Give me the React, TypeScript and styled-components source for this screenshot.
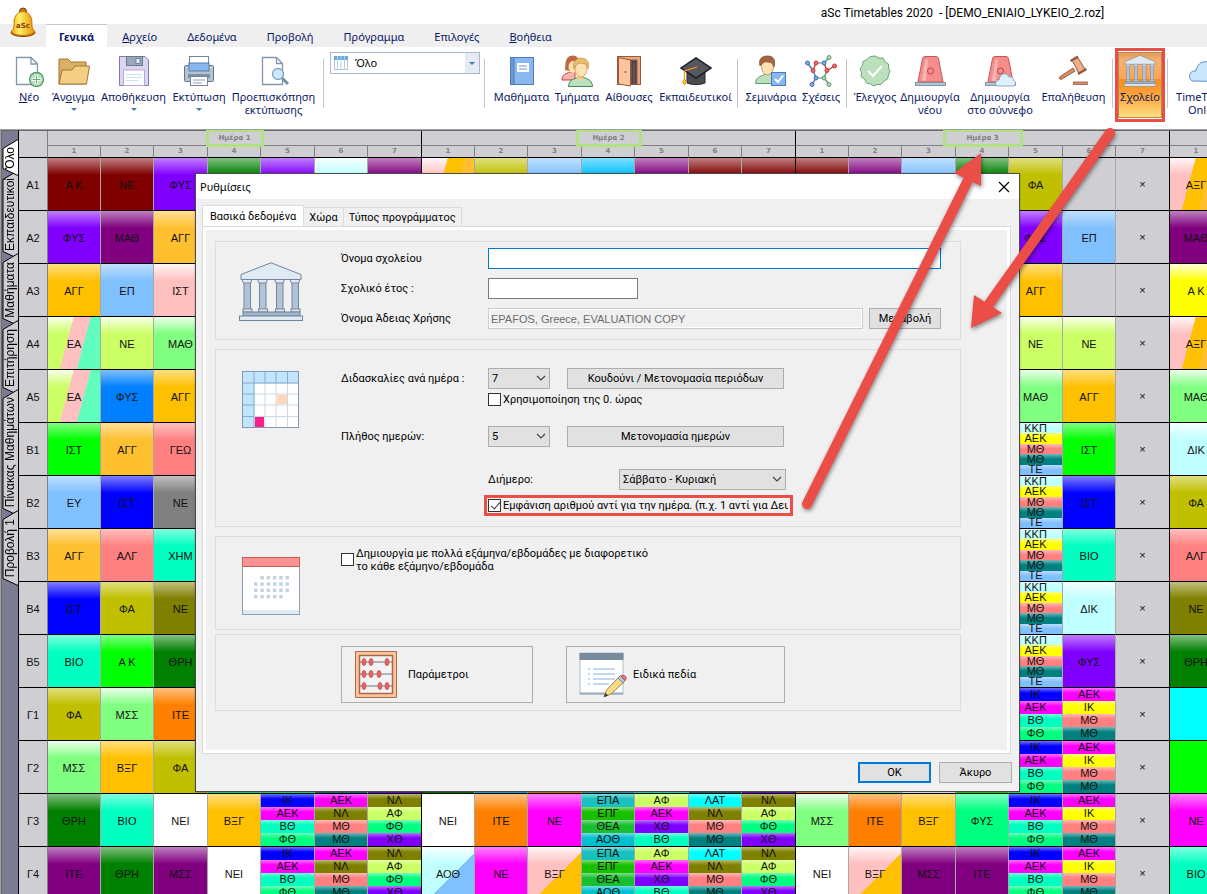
import React from 'react';
import styled, { createGlobalStyle, css } from 'styled-components';

const Global = createGlobalStyle`
  * { box-sizing: border-box; }
  body { margin: 0; background: #fff; font-family: "Liberation Sans", Arial, sans-serif; }
  button, input, select { font: inherit; color: inherit; margin: 0; }
`;

const ui = '"Noto Sans", "Open Sans", sans-serif';
const red = '#eb4d47';
const navy = '#0b1766';

/* ---------- window header ---------- */

const Page = styled.div`
  height: 100vh;
  display: flex;
  flex-direction: column;
  position: relative;
  overflow: hidden;
`;

const TitleBar = styled.header`
  height: 24px;
  flex: none;
  padding: 5px 0 0 68%;
  font: 12px/17px Roboto, sans-serif;
  color: #000;
  white-space: pre;
`;

const Bell = styled.svg`
  position: absolute;
  left: 10px;
  top: 7px;
  width: 26px;
  height: 31px;
`;

const Menu = styled.nav`
  height: 23px;
  flex: none;
  display: flex;
  background: #efefef;
  padding-left: 46px;
`;

const MenuItem = styled.button<{ $active?: boolean }>`
  border: 0;
  border-top: 1px solid ${p => (p.$active ? '#c4c4c4' : 'transparent')};
  background: ${p => (p.$active ? '#fff' : 'transparent')};
  font: ${p => (p.$active ? 'bold' : 'normal')} 11px/16px ${ui};
  color: ${navy};
  padding: 4px ${p => (p.$active ? 13 : 15)}px 2px;
`;

/* ---------- ribbon ---------- */

const Ribbon = styled.div`
  height: 82px;
  flex: none;
  display: flex;
  align-items: flex-start;
  padding-left: 8px;
  overflow: hidden;
`;

const Tool = styled.button<{ $w: number; $on?: boolean }>`
  width: ${p => p.$w}px;
  height: 75px;
  flex: none;
  display: flex;
  flex-direction: column;
  align-items: center;
  border: 0;
  padding: 8px 0 0;
  background: transparent;
  color: ${navy};
  font: 11px/13px ${ui};
  white-space: nowrap;
  position: relative;
  svg.icon { width: 32px; height: 32px; flex: none; margin-bottom: 3px; }
  ${p => p.$on && css`
    z-index: 1;
    height: 70px;
    margin-top: 3px;
    padding-top: 5px;
    background: #fff;
    outline: 3px solid ${red};
    outline-offset: -1px;
    &::before {
      content: '';
      position: absolute;
      inset: 2px 1px 2px 1px;
      border: 1px solid #b98a4a;
      background: linear-gradient(#e39a5c 0, #f8b273 12%, #f9a552 40%, #f98b1c 41%, #fca93e 70%, #fede84 100%);
    }
    > * { position: relative; }
  `}
`;

const ToolLabel = styled.span`
  display: flex;
  flex-direction: column;
  align-items: center;
`;

const Drop = styled.span`
  border: 3px solid transparent;
  border-top-color: #4a78b0;
  border-bottom: 0;
  margin-top: 5px;
`;

const Sep = styled.div`
  width: 1px;
  height: 49px;
  flex: none;
  margin: 12px 4px 0;
  background: #c6c6c6;
`;

const ViewCombo = styled.div`
  width: 150px;
  height: 22px;
  flex: none;
  margin: 5px 0 0 2px;
  border: 1px solid #abb9d0;
  display: flex;
  align-items: center;
  position: relative;
  background: linear-gradient(90deg, #fff 134px, #e6eaf3 134px);
  > svg { position: absolute; left: 3px; top: 3px; pointer-events: none; }
  > span { position: absolute; right: 4px; margin: 0; pointer-events: none; }
`;

const ViewSelect = styled.select`
  appearance: none;
  width: 100%;
  height: 100%;
  border: 0;
  padding: 0 16px 0 24px;
  background: transparent;
  font: 11px/16px ${ui};
  color: #000;
`;

/* ---------- timetable ---------- */

const Board = styled.main`
  flex: 1;
  min-height: 0;
  display: flex;
  align-items: stretch;
  border-top: 1px solid #a0a0a0;
  border-left: 1px solid #a0a0a0;
  overflow: hidden;
  background: #cfced3;
`;

const Side = styled.aside`
  width: 18px;
  flex: none;
  border-left: 1px solid #696969;
  border-top: 1px solid #696969;
  border-right: 1px solid #000;
  background: #7b7b94;
  padding-top: 8px;
  display: flex;
  flex-direction: column;
`;

const SideTab = styled.button<{ $h: number; $on?: boolean }>`
  width: 16px;
  height: ${p => p.$h}px;
  flex: none;
  border: 0;
  padding: 0;
  margin-bottom: -6px;
  background: transparent;
  position: relative;
  z-index: ${p => (p.$on ? 1 : 0)};
  display: flex;
  align-items: center;
  justify-content: center;
  color: #000;
  font: 12px/14px "Liberation Sans", Arial, sans-serif;
  svg { position: absolute; left: 0; top: 0; }
  span { position: relative; writing-mode: vertical-rl; transform: rotate(180deg); white-space: nowrap; }
`;

const Table = styled.table`
  table-layout: fixed;
  width: 1524px;
  flex: none;
  border-collapse: separate;
  border-spacing: 0;
  border-top: 1px solid #696969;
  align-self: flex-start;
  font: 11px/13px "Liberation Sans", Arial, sans-serif;
  color: #111;
  th, td { padding: 0; font-weight: normal; text-align: center; }
`;

const DayHead = styled.th<{ $first: boolean }>`
  height: 14px;
  border-left: 1px solid ${p => (p.$first ? '#808080' : '#000')};
  && { font: bold 7px/14px "DejaVu Sans", sans-serif; }
  color: #808080;
  position: relative;
`;

const Mark = styled.span<{ $w: number }>`
  position: absolute;
  left: 50%;
  top: -2px;
  width: ${p => p.$w}px;
  height: 18px;
  transform: translateX(-50%);
  border: 3px solid #b0e284;
  pointer-events: none;
`;

const HourHead = styled.th<{ $line: string }>`
  height: 12px;
  border-top: 1px solid #808080;
  border-left: 1px solid ${p => p.$line};
  && { font: bold 7px/11px "DejaVu Sans", sans-serif; }
  color: #808080;
`;

const RowHead = styled.th`
  height: 53px;
  border-top: 1px solid #000;
  && { padding-top: 2px; }
`;

const Slot = styled.td<{ $line: string; $bg?: string }>`
  height: 53px;
  border-top: 1px solid #000;
  border-left: 1px solid ${p => p.$line};
  background: ${p => p.$bg || 'transparent'};
  background-clip: padding-box;
  overflow: hidden;
  white-space: nowrap;
  && { padding-top: ${p => (p.$bg ? 2 : 0)}px; }
`;

const Stack = styled.div`
  height: 52px;
  display: flex;
  flex-direction: column;
`;

const Layer = styled.div<{ $bg: string }>`
  flex: 1 1 0;
  min-height: 0;
  display: flex;
  align-items: center;
  justify-content: center;
  background: linear-gradient(rgba(255, 255, 255, 0.45), rgba(255, 255, 255, 0) 5px), ${p => p.$bg};
`;

/* ---------- dialog ---------- */

const Dialog = styled.section`
  position: absolute;
  left: 195px;
  top: 173px;
  width: 825px;
  border: 1px solid #4a4a4a;
  background: #f0f0f0;
  color: #000;
  font: 11px/13px Roboto, "Liberation Sans", sans-serif;
  box-shadow: 0 1px 2px rgba(0, 0, 0, 0.25);
`;

const DialogTitle = styled.div`
  height: 25px;
  display: flex;
  align-items: center;
  justify-content: space-between;
  padding: 0 9px 0 4px;
  background: #fff;
  font: 11px/16px ${ui};
`;

const Close = styled.button`
  border: 0;
  padding: 0;
  background: transparent;
  display: flex;
`;

const Tabs = styled.div`
  display: flex;
  align-items: flex-end;
  height: 27px;
  padding-left: 6px;
`;

const Tab = styled.button<{ $active?: boolean }>`
  height: ${p => (p.$active ? 21 : 19)}px;
  border: 1px solid #dcdcdc;
  border-bottom: 0;
  border-left-width: ${p => (p.$active ? 1 : 0)}px;
  padding: 0 ${p => (p.$active ? 7 : 5)}px;
  background: ${p => (p.$active ? '#fff' : '#f0f0f0')};
`;

const Panel = styled.div`
  margin: 0 8px 0 6px;
  border: 1px solid #dcdcdc;
  box-shadow: inset 0 0 0 3px #fff;
  padding: 14px 49px 42px 12px;
  display: flex;
  flex-direction: column;
  gap: 9px;
`;

const Group = styled.fieldset<{ $h: number; $top: number; $pull?: boolean }>`
  margin: ${p => (p.$pull ? '-5px 0 0' : '0')};
  border: 1px solid #dcdcdc;
  padding: 0 19px 0 0;
  min-width: 0;
  min-height: ${p => p.$h}px;
  display: grid;
  grid-template-columns: 125px 1fr;
  > div { padding-top: ${p => p.$top}px; }
`;

const Art = styled.svg`
  display: block;
  margin: 20px 0 0 23px;
  width: 64px;
  height: 60px;
`;

const Lines = styled.div<{ $gap: number }>`
  display: flex;
  flex-direction: column;
  gap: ${p => p.$gap}px;
`;

const Line = styled.div<{ $indent?: boolean; $after?: number }>`
  display: flex;
  align-items: center;
  height: 21px;
  padding-left: ${p => (p.$indent ? 147 : 0)}px;
  margin-bottom: ${p => p.$after || 0}px;
`;

const Label = styled.label<{ $w?: number }>`
  width: ${p => p.$w || 147}px;
  flex: none;
`;

const Field = styled.input<{ $w?: number; $focus?: boolean }>`
  height: 21px;
  border: 1px solid ${p => (p.$focus ? '#0078d7' : p.disabled ? '#cccccc' : '#7a7a7a')};
  background: ${p => (p.disabled ? '#f0f0f0' : '#fff')};
  box-shadow: ${p => (p.disabled ? 'inset 0 0 0 1px #fff' : 'none')};
  color: ${p => (p.disabled ? '#6d6d6d' : '#000')};
  padding: 0 2px;
  min-width: 0;
  outline: 0;
  font-family: "Liberation Sans", Arial, sans-serif;
  ${p => (p.$w ? `width: ${p.$w}px;` : 'flex: 1;')}
`;

const Push = styled.button<{ $w: number; $primary?: boolean }>`
  width: ${p => p.$w}px;
  height: 21px;
  flex: none;
  padding: 0;
  background: #e1e1e1;
  border: ${p => (p.$primary ? '2px solid #0078d7' : '1px solid #adadad')};
  ${Field} + & { margin-left: 6px; }
`;

const Picker = styled.span<{ $w: number; $gap: number }>`
  position: relative;
  width: ${p => p.$w}px;
  height: 21px;
  margin-right: ${p => p.$gap}px;
  svg { position: absolute; right: 4px; top: 7px; pointer-events: none; }
`;

const Select = styled.select`
  appearance: none;
  width: 100%;
  height: 100%;
  border: 1px solid #adadad;
  background: #e1e1e1;
  padding: 0 16px 0 3px;
`;

const Check = styled.label<{ $wrap?: boolean }>`
  display: flex;
  align-items: ${p => (p.$wrap ? 'flex-start' : 'center')};
  gap: 2px;
  white-space: nowrap;
  input {
    appearance: none;
    width: 13px;
    height: 13px;
    flex: none;
    border: 1px solid #333;
    background: #fff;
    margin-top: ${p => (p.$wrap ? 6 : 0)}px;
    position: relative;
  }
  input:checked::after {
    content: '';
    position: absolute;
    left: 4px;
    top: 0;
    width: 4px;
    height: 8px;
    border: solid #333;
    border-width: 0 1px 1px 0;
    transform: rotate(40deg);
  }
`;

const Highlight = styled.div`
  width: 309px;
  height: 21px;
  margin-left: -4px;
  border: 3px solid ${red};
  padding: 0 2px 0 1px;
  display: flex;
  align-items: center;
  overflow: hidden;
  label { overflow: hidden; }
`;

const BigButtons = styled.div`
  display: flex;
  gap: 33px;
`;

const BigButton = styled.button<{ $w: number }>`
  width: ${p => p.$w}px;
  height: 57px;
  border: 1px solid #adadad;
  background: #f0f0f0;
  padding: 0 12px;
  display: flex;
  align-items: center;
  gap: 6px;
  svg { width: 48px; height: 50px; flex: none; }
`;

const Footer = styled.div`
  display: flex;
  justify-content: flex-end;
  gap: 8px;
  padding: 8px 7px 8px;
`;

const Arrows = styled.svg`
  position: absolute;
  left: 790px;
  top: 120px;
  width: 340px;
  height: 400px;
  pointer-events: none;
  filter: drop-shadow(1px 2px 2px rgba(0, 0, 0, 0.45));
`;

/* ---------- icons ---------- */

const Icon = ({ children }: { children: React.ReactNode }) => (
  <svg className="icon" viewBox="0 0 32 32" fill="none" aria-hidden="true">{children}</svg>
);

const NewIcon = () => (
  <Icon>
    <path d="M3.500 2.500H18L24.500 9V29.500H3.500Z M18 2.500V9H24.500" fill="#fff" stroke="#8496a9" strokeWidth="1.300" />
    <circle cx="23.500" cy="24.500" r="7" fill="#bce0bd" stroke="#4f9b6a" strokeWidth="1.300" />
    <path d="M23.500 20V29M19 24.500H28" stroke="#fff" strokeWidth="2.600" />
    <path d="M23.500 20.500V28.500M19.500 24.500H27.500" stroke="#5fae7a" strokeWidth="1" />
  </Icon>
);

const OpenIcon = () => (
  <Icon>
    <path d="M1 29V4H10L13 7H28V29Z" fill="#dbb065" stroke="#9c7636" />
    <path d="M1 29L4 15H14L17 11H31.500L28.500 29Z" fill="#f5ce85" stroke="#9c7636" />
  </Icon>
);

const SaveIcon = () => (
  <Icon>
    <path d="M1.500 1.500H27L30.500 5V30.500H1.500Z" fill="#dcd5f2" stroke="#8b75a1" />
    <rect x="8.500" y="1.500" width="16" height="9" fill="#9ba6b7" stroke="#66788f" />
    <rect x="18" y="3.500" width="4" height="5" fill="#e4e9f0" stroke="#66788f" strokeWidth=".8" />
    <rect x="5.500" y="15" width="21" height="15.500" fill="#fff" stroke="#b9a6dd" />
    <path d="M8 19.500H24M8 22.500H24M8 25.500H20" stroke="#c7e4f8" />
  </Icon>
);

const PrintIcon = () => (
  <Icon>
    <rect x="6.500" y="1.500" width="19" height="12" fill="#fff" stroke="#73869a" />
    <rect x="1.500" y="10.500" width="29" height="16" rx="1" fill="#b6c4d2" stroke="#62758a" />
    <rect x="6" y="8" width="20" height="8" fill="#8bb7f0" stroke="#4e7ab5" />
    <rect x="5" y="19" width="22" height="4" fill="#7d90a6" />
    <rect x="7.500" y="21.500" width="17" height="9" fill="#fff" stroke="#73869a" />
    <path d="M10 25H22M10 28H19" stroke="#8fa1b3" />
    <circle cx="28" cy="13" r="1" fill="#f4dd7a" />
  </Icon>
);

const PreviewIcon = () => (
  <Icon>
    <path d="M4.500 2.500H18.500L24.500 8.500V29.500H4.500Z M18.500 2.500V8.500H24.500" fill="#fff" stroke="#8496a9" strokeWidth="1.300" />
    <path d="M24 23L30 29" stroke="#7b8fa8" strokeWidth="3" />
    <circle cx="20" cy="19" r="5.500" fill="#d0e8fb" stroke="#7aa0ca" strokeWidth="1.300" />
  </Icon>
);

const BookIcon = () => (
  <Icon>
    <rect x="4.500" y="2.500" width="23" height="27" fill="#8bb7f0" stroke="#4e7ab5" />
    <rect x="4.500" y="2.500" width="3.500" height="27" fill="#6b9ade" stroke="#4e7ab5" />
    <rect x="11" y="8" width="12" height="9" fill="#fff" />
    <path d="M13 11H21M13 14H21" stroke="#6c93cb" />
  </Icon>
);

const ClassIcon = () => (
  <Icon>
    <path d="M4 15C5 10 3 1 12 .5C19 1 19 8 18 15L12 17Z" fill="#c1663f" />
    <path d="M1 25C1 19 5 19 9 17H14V25Z" fill="#f5b3b2" stroke="#c74343" />
    <ellipse cx="12" cy="12" rx="4.500" ry="6" fill="#fbdfae" />
    <path d="M7.500 31.500C8 24 13 24.500 17 22H22C26 24.500 31 24 31.500 31.500Z" fill="#bce0bd" stroke="#3f8a58" />
    <path d="M16 19H22V24L19 26L16 24Z" fill="#f5ce85" />
    <ellipse cx="20" cy="14" rx="6" ry="8" fill="#ffe0b2" stroke="#c69a48" strokeWidth=".7" />
    <path d="M13 14C11 6 16 3 20 3C26 3 29 7 27 14L25 9C20 8 17 8 15 10Z" fill="#e6be6c" stroke="#b98c3c" strokeWidth=".6" />
  </Icon>
);

const RoomIcon = () => (
  <Icon>
    <rect x="4.500" y="1.500" width="23" height="28" fill="#e9a783" stroke="#955b3d" />
    <rect x="8" y="5" width="16" height="24.500" fill="#54424a" stroke="#955b3d" />
    <path d="M21 8V29M18 6V29" stroke="#76616a" />
    <path d="M5.500 2.500L17.500 5V31L5.500 29Z" fill="#ffc49c" stroke="#955b3d" />
    <circle cx="12.500" cy="17" r="1" fill="#955b3d" />
  </Icon>
);

const TeacherIcon = () => (
  <Icon>
    <path d="M7 15H25V28C20 30 12 30 7 28Z" fill="#4a4a4d" stroke="#2b2b2f" />
    <path d="M1 13L16 3L31 13L16 23Z" fill="#58585c" stroke="#141b2b" strokeWidth="1.500" />
    <path d="M17 12L4.500 16V25" stroke="#f09a1c" strokeWidth="1.300" />
    <path d="M4.500 24L2.500 27L4.500 30L6.500 27Z" fill="#f7c23e" stroke="#f09a1c" />
  </Icon>
);

const SeminarIcon = () => (
  <Icon>
    <path d="M.5 28.500C1 20 8 22 11 18H16C18 22 24 21 25 28.500Z" fill="#bce0bd" stroke="#5d9b6f" />
    <ellipse cx="12.500" cy="11.500" rx="6" ry="8.500" fill="#ffe0b2" stroke="#a87d4c" strokeWidth=".7" />
    <path d="M5 11C3 3 8 1 12.500 1C18 1 21 4 19 12L17 8C13 7 10 6 8 8Z" fill="#a5663f" stroke="#7a4525" strokeWidth=".7" />
    <rect x="16.500" y="17.500" width="14" height="13" fill="#8bb7f0" stroke="#4e7ab5" />
    <path d="M20 24L23 27L28 20.500" stroke="#fff" strokeWidth="2" />
  </Icon>
);

const nodes: [number, number, 'r' | 'b' | 'g'][] = [
  [2.500, 8, 'b'], [11, 8, 'r'], [19, 8, 'b'], [24, 2.500, 'g'], [8, 15.500, 'r'], [22, 15.500, 'r'],
  [29.500, 11, 'r'], [11, 23, 'b'], [19, 23, 'g'], [7, 29.500, 'b'], [24, 29.500, 'g'],
];

const RelationIcon = () => (
  <Icon>
    <path d="M11 8L19 8M11 23L19 23" stroke="#6b7785" strokeWidth="1.200" />
    <path d="M2.500 8L8 15.500M11 23L7 29.500M8 15.500L11 23" stroke="#4573bb" strokeWidth="1.400" />
    <path d="M11 8L8 15.500M19 8L22 15.500L29.500 11" stroke="#c13a3a" strokeWidth="1.400" />
    <path d="M19 8L24 2.500M22 15.500L19 23L24 29.500" stroke="#5a9a6a" strokeWidth="1.400" />
    {nodes.map(([x, y, c], i) => (
      <circle key={i} cx={x} cy={y} r="2" fill={c === 'r' ? '#ef6b6b' : c === 'b' ? '#7fabea' : '#b2dcb6'} stroke={c === 'r' ? '#c13a3a' : c === 'b' ? '#3f6db3' : '#5a9a6a'} />
    ))}
  </Icon>
);

const CheckIcon = () => (
  <Icon>
    <path d="M16 1L20 3L24 3L26 7L29.500 9L29.500 13L31 16L29.500 20L28.500 24L25 26L22 29.500L18 29.500L15 31L11.500 29L7.500 28L5.500 24L2 21.500L2.500 17.500L1 14L3.500 10.500L4 6.500L8 4.500L11 1.500Z" fill="#bce0bd" stroke="#68a578" />
    <path d="M9 16L14 21L23 11" stroke="#fff" strokeWidth="2" />
  </Icon>
);

const Siren = () => (
  <>
    <path d="M4 27L8.500 3.500Q9 1.500 11 1.500H22Q24 1.500 24.500 3.500L29 27Z" fill="#f58d8d" stroke="#c95454" />
    <path d="M7.500 26L11.500 4.500H14L12 26Z" fill="#f9b3b3" />
    <circle cx="16.500" cy="16" r="3" fill="#f58d8d" stroke="#c23f3f" />
    <rect x="1.500" y="27.500" width="30" height="3" fill="#b6c4d2" stroke="#73869a" strokeWidth=".8" />
  </>
);

const GenIcon = () => <Icon><Siren /></Icon>;

const CloudGenIcon = () => (
  <Icon>
    <Siren />
    <path d="M13 31C10 29 12 24.500 15 25C16 17.500 23 17 25 22C28 21 30 24 29.500 25.500C32 26 32 30 30 31Z" fill="#dff0fe" stroke="#7496c4" strokeWidth=".8" />
  </Icon>
);

const GavelIcon = () => (
  <Icon>
    <path d="M1.500 22L15 13L17 16L3 24.500Q1 24 1.500 22Z" fill="#d98e6a" stroke="#955b3d" />
    <path d="M14 5L20 3L27 14L21 18.500Z" fill="#f0ae86" stroke="#955b3d" />
    <path d="M12.500 6L20 1.500M20 19L28.500 14" stroke="#955b3d" strokeWidth="2.400" />
    <rect x="15.500" y="27" width="14" height="2.500" fill="#d98e6a" stroke="#955b3d" strokeWidth=".8" />
  </Icon>
);

const Temple = () => (
  <g stroke="#71859c" strokeWidth="1">
    <path d="M2 12.500L32 .8L62 12.500V17.500H2Z" fill="#dfeaf2" />
    {[3, 18.500, 35.500, 51].map(x => (
      <g key={x}>
        <rect x={x + 2} y="20" width="6.500" height="28" fill="#b3c3d6" />
        <path d={`M${x} 17.500H${x + 10}L${x + 8.500} 21H${x + 1.500}Z`} fill="#dfeaf2" />
        <rect x={x + 1} y="47" width="9" height="3" fill="#dfeaf2" />
      </g>
    ))}
    <rect x="4" y="50" width="57" height="4" fill="#a3b5c9" />
    <rect x=".5" y="54" width="63" height="4.500" fill="#dfeaf2" />
  </g>
);

const SchoolIcon = () => (
  <svg className="icon" viewBox="0 0 64 60" fill="none" preserveAspectRatio="none" aria-hidden="true"><Temple /></svg>
);

const OnlineIcon = () => (
  <Icon>
    <path d="M3 26C-2 22 1 15 7 16C8 6 20 3 24 12C29 10 33 15 31 18C37 19 37 26 32 26.500Z" fill="#c9e6fd" stroke="#5b8fcf" />
  </Icon>
);

const TableIcon = () => (
  <svg width="14" height="14" viewBox="0 0 14 14" aria-hidden="true">
    <rect x=".5" y=".5" width="13" height="13" fill="#fff" stroke="#b4c4d3" />
    <rect x="0" y="0" width="14" height="4" fill="#6aa8e0" />
    <path d="M3.500 0V14M7 0V14M10.500 0V14" stroke="#b4cfe4" />
  </svg>
);

const WeekArt = () => (
  <Art viewBox="0 0 64 60" aria-hidden="true">
    <rect x="3.500" y="1.500" width="56" height="56" fill="#fff" />
    <path d="M3.500 1.500H59.500V13H15V57.500H3.500Z" fill="#c0e5fd" />
    <path d="M15 1.500V57.500M26 1.500V57.500M37 1.500V57.500M48.500 1.500V57.500M3.500 13H59.500M3.500 24H59.500M3.500 35H59.500M3.500 46.500H59.500" stroke="#ccd9e4" />
    <path d="M15 1.500V57.500M26 1.500V13M37 1.500V13M48.500 1.500V13M3.500 13H59.500M3.500 24H15M3.500 35H15M3.500 46.500H15" stroke="#86aed6" />
    <rect x="38" y="25" width="10" height="9" fill="#ffd7b8" />
    <rect x="16" y="47" width="9" height="10" fill="#ff1f88" />
    <rect x="3.500" y="1.500" width="56" height="56" fill="none" stroke="#8399b2" />
  </Art>
);

const MonthArt = () => (
  <Art viewBox="0 0 64 60" aria-hidden="true">
    <rect x="3.500" y=".5" width="57" height="57" fill="#fff" stroke="#8c9fb5" />
    <rect x="4" y="53" width="56" height="4" fill="#dfeaf2" />
    <rect x="3.500" y=".5" width="57" height="9" fill="#fa9492" stroke="#cf5a5a" />
    {[0, 1, 2, 3].map(r => [0, 1, 2, 3, 4, 5].map(c => (
      (r === 0 && c === 0) || (r === 3 && c === 5) ? null
        : <rect key={`${r}${c}`} x={15 + c * 6.300} y={19 + r * 6.300} width="3.500" height="3.500" fill="#c5d3e0" />
    )))}
  </Art>
);

const AbacusIcon = () => (
  <svg viewBox="0 0 48 50" aria-hidden="true">
    <path d="M1.500 1.500H42.500V47.500H1.500ZM5.500 5.500V43.500H38.500V5.500Z" fill="#ffc49c" stroke="#a96b4c" fillRule="evenodd" />
    <path d="M5.500 5.500H38.500V43.500H5.500Z" fill="#f3f3f3" stroke="#a96b4c" strokeWidth="1.500" />
    {[[12, 10, 17, 33], [24, 10, 17, 25], [36, 10, 26, 33]].map(([y, ...xs]) => (
      <g key={y}>
        <path d={`M6 ${y}H38`} stroke="#62758a" />
        {xs.map(x => <ellipse key={x} cx={x} cy={y} rx="2" ry="3.500" fill="#e56363" stroke="#d05a5a" />)}
      </g>
    ))}
  </svg>
);

const NoteIcon = () => (
  <svg viewBox="0 0 48 50" aria-hidden="true">
    <rect x="1" y="3" width="43" height="41" fill="#fff" stroke="#b0bfce" />
    <rect x=".5" y="3" width="44" height="7" fill="#788b9c" />
    <path d="M1 43.500H44" stroke="#9aaabd" strokeWidth="2" />
    <path d="M14 19H36M14 24H36M14 29H36M14 34H30M9 19H11M9 24H11M9 29H11M9 34H11" stroke="#83aeea" />
    <path d="M25 47L27.500 40L39 28L44 33L32 44Z" fill="#f4dc8c" stroke="#a5843c" />
    <path d="M39 28L41.500 25.500L46 30.500L44 33Z" fill="#b8c9dc" stroke="#71859c" />
    <path d="M42 26Q45 24 47 27Q47.500 29 46 30.500Z" fill="#ef7b7b" stroke="#c14a4a" />
    <path d="M25 47L26.500 43L29 45.500Z" fill="#333" />
  </svg>
);

const Chevron = () => (
  <svg width="10" height="7" viewBox="0 0 10 7" fill="none" aria-hidden="true">
    <path d="M1 1L5 5L9 1" stroke="#444" strokeWidth="1.200" />
  </svg>
);

/* ---------- timetable data ---------- */

type Cell =
  | { kind: 'empty' }
  | { kind: 'closed' }
  | { kind: 'one'; text: string; bg: string }
  | { kind: 'stack'; items: [string, string][] };

const C = {
  maroon: '#800000', violet: '#8000ff', purple: '#800080', amber: '#ffc000', gold: '#ffc030',
  sky: '#80c0ff', rose: '#ffc0c0', lime: '#ccff66', mint: '#80ff80', azure: '#0080ff',
  green: '#00ff00', coral: '#ff8080', blue: '#0000ff', grey: '#808080', turquoise: '#00ffc0',
  mustard: '#c0c000', olive: '#808000', forest: '#008000', orange: '#ff8000', ice: '#c0ffff',
  yellow: '#ffff00', magenta: '#ff00ff', teal: '#008080', spring: '#00ff80', cyan: '#00ffff',
  aqua: '#00c0ff', white: '#ffffff', seafoam: '#60ffc0',
};

const pale = [C.rose, C.lime, C.mint, C.ice, C.yellow];

const shine = (color: string) =>
  `linear-gradient(rgba(255,255,255,${pale.includes(color) ? 0.85 : 0.5}), rgba(255,255,255,0) 17px), ${color}`;

const one = (text: string, color: string): Cell => ({ kind: 'one', text, bg: shine(color) });
const tri = (text: string, a: string, b: string, c: string): Cell => ({
  kind: 'one', text, bg: `linear-gradient(105deg, transparent 39%, ${b} 39%, ${b} 65%, ${c} 65%), ${shine(a)}`,
});
const duo = (text: string, a: string, b: string): Cell => ({
  kind: 'one', text, bg: `linear-gradient(135deg, transparent 56%, ${b} 56%), ${shine(a)}`,
});
const stack = (...items: [string, string][]): Cell => ({ kind: 'stack', items });
const none: Cell = { kind: 'empty' };
const off: Cell = { kind: 'closed' };
const gap = (n: number): Cell[] => Array(n).fill(none);

const five = stack(['ΚΚΠ', C.ice], ['ΑΕΚ', C.yellow], ['ΜΘ', C.coral], ['ΜΘ', C.teal], ['ΤΕ', C.sky]);
const s1 = stack(['ΙΚ', C.blue], ['ΑΕΚ', C.magenta], ['ΒΘ', C.turquoise], ['ΦΘ', C.spring]);
const s2 = stack(['ΑΕΚ', C.magenta], ['ΝΛ', C.olive], ['ΜΘ', C.coral], ['ΜΘ', C.teal]);
const s3 = stack(['ΝΛ', C.olive], ['ΑΦ', C.lime], ['ΦΘ', C.spring], ['ΧΘ', C.violet]);
const s4 = stack(['ΕΠΑ', '#18c0c0'], ['ΕΠΓ', '#18c000'], ['ΘΕΑ', '#18c030'], ['ΑΟΘ', '#00c0d0']);
const s5 = stack(['ΑΦ', C.lime], ['ΑΕΚ', C.magenta], ['ΧΘ', C.violet], ['ΒΘ', C.turquoise]);
const s6 = stack(['ΛΑΤ', C.cyan], ['ΝΛ', C.olive], ['ΜΘ', C.coral], ['ΜΘ', C.teal]);
const s7 = stack(['ΑΕΚ', C.magenta], ['ΙΚ', C.yellow], ['ΜΘ', C.coral], ['ΜΘ', C.teal]);

const axg = tri('ΑΞΓ', C.rose, C.amber, C.gold);
const ea = tri('ΕΑ', C.lime, C.rose, C.seafoam);

const rows: [string, Cell[]][] = [
  ['A1', [one('Α Κ', C.maroon), one('ΝΕ', C.maroon), one('ΦΥΣ', C.violet), one('', C.forest), one('', C.violet), one('', C.ice), one('', C.purple),
    tri('', C.rose, C.amber, C.gold), one('', C.mustard), one('', C.sky), one('', C.aqua), one('', C.purple), one('', C.maroon), one('', C.maroon),
    one('', C.maroon), one('', C.purple), one('', C.sky), one('', C.forest), one('ΦΑ', C.mustard), none, off, axg]],
  ['A2', [one('ΦΥΣ', C.violet), one('ΜΑΘ', C.purple), one('ΑΓΓ', C.gold), ...gap(15), one('ΦΥΣ', C.violet), one('ΕΠ', C.sky), off, one('ΜΑΘ', C.purple)]],
  ['A3', [one('ΑΓΓ', C.amber), one('ΕΠ', C.sky), one('ΙΣΤ', C.rose), ...gap(15), one('ΑΓΓ', C.amber), none, off, one('Α Κ', C.yellow)]],
  ['A4', [ea, one('ΝΕ', C.lime), one('ΜΑΘ', C.mint), ...gap(15), one('ΝΕ', C.lime), one('ΝΕ', C.lime), off, axg]],
  ['A5', [ea, one('ΦΥΣ', C.azure), one('ΑΓΓ', C.amber), ...gap(15), one('ΜΑΘ', C.mint), one('ΑΓΓ', C.amber), off, one('ΜΑΘ', C.mint)]],
  ['B1', [one('ΙΣΤ', C.green), one('ΑΓΓ', C.gold), one('ΓΕΩ', C.coral), ...gap(15), five, one('ΙΣΤ', C.green), off, one('ΔΙΚ', C.ice)]],
  ['B2', [one('ΕΥ', C.sky), one('ΙΣΤ', C.blue), one('ΝΕ', C.grey), ...gap(15), five, one('ΙΣΤ', C.blue), off, one('ΦΑ', C.mustard)]],
  ['B3', [one('ΑΓΓ', C.gold), one('ΑΛΓ', C.coral), one('ΧΗΜ', C.turquoise), ...gap(15), five, one('ΒΙΟ', C.turquoise), off, one('ΑΛΓ', C.coral)]],
  ['B4', [one('ΙΣΤ', C.blue), one('ΦΑ', C.mustard), one('ΝΕ', C.olive), ...gap(15), five, one('ΔΙΚ', C.ice), off, one('ΝΕ', C.olive)]],
  ['B5', [one('ΒΙΟ', C.turquoise), one('Α Κ', C.green), one('ΘΡΗ', C.forest), ...gap(15), five, one('ΦΥΣ', C.violet), off, one('ΘΡΗ', C.forest)]],
  ['Γ1', [one('ΦΑ', C.mustard), one('ΜΣΣ', C.mint), one('ΙΤΕ', C.orange), ...gap(15), s1, s7, off, { kind: 'one', text: '', bg: C.cyan }]],
  ['Γ2', [one('ΜΣΣ', C.mint), one('ΒΞΓ', C.amber), one('ΦΑ', C.mustard), one('', C.spring), one('', C.spring), one('', C.teal), one('', C.violet),
    one('', C.forest), one('', C.aqua), one('', C.orange), one('', '#00c0d0'), one('', C.turquoise), one('', C.teal), one('', C.violet),
    one('', C.orange), one('', C.mint), one('', C.white), one('', C.green), s1, s7, off, { kind: 'one', text: '', bg: C.green }]],
  ['Γ3', [one('ΘΡΗ', C.forest), one('ΒΙΟ', C.turquoise), one('ΝΕΙ', C.white), one('ΒΞΓ', C.amber), s1, s2, s3,
    one('ΝΕΙ', C.white), one('ΙΤΕ', C.orange), one('ΝΕ', C.magenta), s4, s5, s6, s3,
    one('ΜΣΣ', C.mint), one('ΙΤΕ', C.orange), one('ΒΞΓ', C.amber), one('ΦΥΣ', C.spring), s1, s7, off, one('ΝΕ', C.magenta)]],
  ['Γ4', [one('ΙΤΕ', C.purple), one('ΘΡΗ', C.forest), one('ΜΣΣ', C.purple), one('ΝΕΙ', C.white), s1, s2, s3,
    duo('ΑΟΘ', C.ice, C.sky), one('ΝΕ', C.magenta), duo('ΒΞΓ', C.rose, C.amber), s4, s5, s6, s3,
    one('ΝΕΙ', C.white), duo('ΒΞΓ', C.rose, C.amber), one('ΜΣΣ', C.purple), one('ΙΤΕ', C.purple), s1, s7, off, one('ΒΙΟ', C.turquoise)]],
];

const colWidths = [53, 53, 54, 53, 54, 53, 54];
const days = ['Ημέρα 1', 'Ημέρα 2', 'Ημέρα 3', ''];
const marks = [58, 66, 80, 0];

const lineOf = (i: number, firstColor: string, inner: string) =>
  i === 0 ? firstColor : i % 7 === 0 ? '#000' : inner;

const Lesson = ({ cell, i }: { cell: Cell; i: number }) => {
  const line = lineOf(i, '#808080', '#a8a8a8');
  if (cell.kind === 'one') return <Slot $line={line} $bg={cell.bg}>{cell.text}</Slot>;
  if (cell.kind === 'stack') {
    return (
      <Slot $line={line}>
        <Stack>{cell.items.map(([t, c], k) => <Layer key={k} $bg={c}>{t}</Layer>)}</Stack>
      </Slot>
    );
  }
  return <Slot $line={line}>{cell.kind === 'closed' ? '×' : ''}</Slot>;
};

const sideTabs: [string, number][] = [
  ['Όλο', 37], ['Εκπαιδευτικοί', 89], ['Μαθήματα', 73], ['Επιτήρηση', 75], ['Πίνακας Μαθημάτων', 127], ['Προβολή 1', 76],
];

const menu: [string, string][] = [
  ['Α', 'ρχείο'], ['', 'Δεδομένα'], ['', 'Προβολή'], ['', 'Πρόγραμμα'], ['', 'Επιλογές'], ['Β', 'οήθεια'],
];

export default function App() {
  return (
    <Page>
      <Global />
      <TitleBar>aSc Timetables 2020  - [DEMO_ENIAIO_LYKEIO_2.roz]</TitleBar>
      <Menu>
        <MenuItem $active>Γενικά</MenuItem>
        {menu.map(([u, rest]) => (
          <MenuItem key={rest}>{u && <u>{u}</u>}{rest}</MenuItem>
        ))}
      </Menu>
      <Bell viewBox="0 0 26 31" aria-hidden="true">
        <defs>
          <linearGradient id="bell" x1="0" x2="1">
            <stop offset="0" stopColor="#f6a500" />
            <stop offset=".35" stopColor="#fff06a" />
            <stop offset="1" stopColor="#e88b00" />
          </linearGradient>
        </defs>
        <ellipse cx="13" cy="25.500" rx="12" ry="4" fill="#d9780a" stroke="#8c4300" />
        <circle cx="13" cy="4.500" r="3.500" fill="#c9780c" stroke="#7a3a00" />
        <path d="M4 19Q3 5 13 4.500Q23 5 22 19Q22 22 25 25Q21 28.500 13 28.500Q5 28.500 1 25Q4 22 4 19Z" fill="url(#bell)" stroke="#b86a00" strokeWidth=".8" />
        <text x="13" y="21" textAnchor="middle" fontSize="7" fontWeight="bold" fontFamily="DejaVu Sans, sans-serif" fill="#8c3c00">aSc</text>
      </Bell>

      <Ribbon>
        <Tool $w={42}><NewIcon /><ToolLabel><span><u>Ν</u>έο</span></ToolLabel></Tool>
        <Tool $w={47}><OpenIcon /><ToolLabel><span>Άν<u>ο</u>ιγμα</span></ToolLabel><Drop /></Tool>
        <Tool $w={73}><SaveIcon /><ToolLabel>Αποθήκευση</ToolLabel><Drop /></Tool>
        <Tool $w={58}><PrintIcon /><ToolLabel>Εκτύπωση</ToolLabel><Drop /></Tool>
        <Tool $w={91}><PreviewIcon /><ToolLabel><span>Προεπισκόπηση</span><span>εκτύπωσης</span></ToolLabel></Tool>
        <Sep />
        <ViewCombo>
          <ViewSelect aria-label="Προβολή" defaultValue="all"><option value="all">Όλο</option></ViewSelect>
          <TableIcon />
          <Drop />
        </ViewCombo>
        <Sep />
        <Tool $w={65}><BookIcon /><ToolLabel>Μαθήματα</ToolLabel></Tool>
        <Tool $w={46}><ClassIcon /><ToolLabel>Τμήματα</ToolLabel></Tool>
        <Tool $w={58}><RoomIcon /><ToolLabel>Αίθουσες</ToolLabel></Tool>
        <Tool $w={75}><TeacherIcon /><ToolLabel>Εκπαιδευτικοί</ToolLabel></Tool>
        <Sep />
        <Tool $w={58}><SeminarIcon /><ToolLabel>Σεμινάρια</ToolLabel></Tool>
        <Tool $w={42}><RelationIcon /><ToolLabel>Σχέσεις</ToolLabel></Tool>
        <Sep />
        <Tool $w={48}><CheckIcon /><ToolLabel>Έλεγχος</ToolLabel></Tool>
        <Tool $w={62}><GenIcon /><ToolLabel><span>Δημιουργία</span><span>νέου</span></ToolLabel></Tool>
        <Tool $w={78}><CloudGenIcon /><ToolLabel><span>Δημιουργία</span><span>στο σύννεφο</span></ToolLabel></Tool>
        <Tool $w={69}><GavelIcon /><ToolLabel>Επαλήθευση</ToolLabel></Tool>
        <Sep />
        <Tool $w={46} $on><SchoolIcon /><ToolLabel>Σχολείο</ToolLabel></Tool>
        <Sep />
        <Tool $w={66}><OnlineIcon /><ToolLabel><span>TimeTables</span><span>Online</span></ToolLabel></Tool>
      </Ribbon>

      <Board>
        <Side>
          {sideTabs.map(([name, h], i) => (
            <SideTab key={name} $h={h} $on={i === 0}>
              <svg width="16" height={h} viewBox={`0 0 16 ${h}`} aria-hidden="true">
                <path d={`M16 .5L1 9.500V${h - 7.500}L16 ${h - 0.5}`} fill={i === 0 ? '#fff' : '#cfced3'} stroke="#000" />
              </svg>
              <span>{name}</span>
            </SideTab>
          ))}
        </Side>
        <Table>
          <colgroup>
            <col style={{ width: 28 }} />
            {days.map((d, n) => colWidths.map((w, k) => <col key={`${n}-${k}`} style={{ width: w }} />))}
          </colgroup>
          <thead>
            <tr>
              <th rowSpan={2} />
              {days.map((d, k) => (
                <DayHead key={k} colSpan={7} $first={k === 0}>
                  {d}
                  {marks[k] > 0 && <Mark $w={marks[k]} />}
                </DayHead>
              ))}
            </tr>
            <tr>
              {days.map((d, n) => colWidths.map((_, k) => (
                <HourHead key={`${n}-${k}`} $line={lineOf(n * 7 + k, '#808080', '#808080')}>{k + 1}</HourHead>
              )))}
            </tr>
          </thead>
          <tbody>
            {rows.map(([name, cells]) => (
              <tr key={name}>
                <RowHead scope="row">{name}</RowHead>
                {cells.map((cell, i) => <Lesson key={i} cell={cell} i={i} />)}
              </tr>
            ))}
          </tbody>
        </Table>
      </Board>

      <Dialog role="dialog" aria-label="Ρυθμίσεις">
        <DialogTitle>
          Ρυθμίσεις
          <Close aria-label="Κλείσιμο">
            <svg width="12" height="12" viewBox="0 0 12 12" aria-hidden="true">
              <path d="M1 1L11 11M11 1L1 11" stroke="#000" strokeWidth="1.200" />
            </svg>
          </Close>
        </DialogTitle>
        <Tabs>
          <Tab $active>Βασικά δεδομένα</Tab>
          <Tab>Χώρα</Tab>
          <Tab>Τύπος προγράμματος</Tab>
        </Tabs>
        <Panel>
          <Group $h={99} $top={6}>
            <Art viewBox="0 0 64 60" fill="none" aria-hidden="true"><Temple /></Art>
            <Lines $gap={9}>
              <Line>
                <Label htmlFor="school">Όνομα σχολείου</Label>
                <Field id="school" $focus />
              </Line>
              <Line>
                <Label htmlFor="year">Σχολικό έτος :</Label>
                <Field id="year" $w={150} />
              </Line>
              <Line>
                <Label htmlFor="licence">Όνομα Άδειας Χρήσης</Label>
                <Field id="licence" $w={375} disabled defaultValue="EPAFOS, Greece, EVALUATION COPY" />
                <Push $w={72}>Μεταβολή</Push>
              </Line>
            </Lines>
          </Group>

          <Group $h={178} $top={18}>
            <WeekArt />
            <Lines $gap={0}>
              <Line>
                <Label htmlFor="periods">Διδασκαλίες ανά ημέρα :</Label>
                <Picker $w={62} $gap={17}>
                  <Select id="periods" defaultValue="7"><option>7</option></Select>
                  <Chevron />
                </Picker>
                <Push $w={217}>Κουδούνι / Μετονομασία περιόδων</Push>
              </Line>
              <Line $indent $after={16}>
                <Check><input type="checkbox" />Χρησιμοποίηση της 0. ώρας</Check>
              </Line>
              <Line $after={22}>
                <Label htmlFor="count">Πλήθος ημερών:</Label>
                <Picker $w={62} $gap={17}>
                  <Select id="count" defaultValue="5"><option>5</option></Select>
                  <Chevron />
                </Picker>
                <Push $w={217}>Μετονομασία ημερών</Push>
              </Line>
              <Line $indent $after={5}>
                <Label htmlFor="weekend" $w={131}>Διήμερο:</Label>
                <Picker $w={167} $gap={0}>
                  <Select id="weekend" defaultValue="w"><option value="w">Σάββατο - Κυριακή</option></Select>
                  <Chevron />
                </Picker>
              </Line>
              <Line $indent>
                <Highlight>
                  <Check><input type="checkbox" defaultChecked />Εμφάνιση αριθμού αντί για την ημέρα. (π.χ. 1 αντί για Δευτέρα)</Check>
                </Highlight>
              </Line>
            </Lines>
          </Group>

          <Group $h={94} $top={10}>
            <MonthArt />
            <div>
              <Check $wrap>
                <input type="checkbox" />
                <span>Δημιουργία με πολλά εξάμηνα/εβδομάδες με διαφορετικό<br />το κάθε εξάμηνο/εβδομάδα</span>
              </Check>
            </div>
          </Group>

          <Group $h={77} $top={11} $pull>
            <span />
            <BigButtons>
              <BigButton $w={192}><AbacusIcon />Παράμετροι</BigButton>
              <BigButton $w={219}><NoteIcon />Ειδικά πεδία</BigButton>
            </BigButtons>
          </Group>
        </Panel>
        <Footer>
          <Push $w={73} $primary>ΟΚ</Push>
          <Push $w={73}>Άκυρο</Push>
        </Footer>
      </Dialog>

      <Arrows viewBox="790 120 340 400" aria-hidden="true">
        <g stroke={red} strokeWidth="10" strokeLinecap="round">
          <path d="M807 504L967 182" />
          <path d="M1110 133L989 304" />
        </g>
        <path d="M981 153L954 173L981 186Z" fill={red} />
        <path d="M971 328L974 295L1002 313Z" fill={red} />
      </Arrows>
    </Page>
  );
}
